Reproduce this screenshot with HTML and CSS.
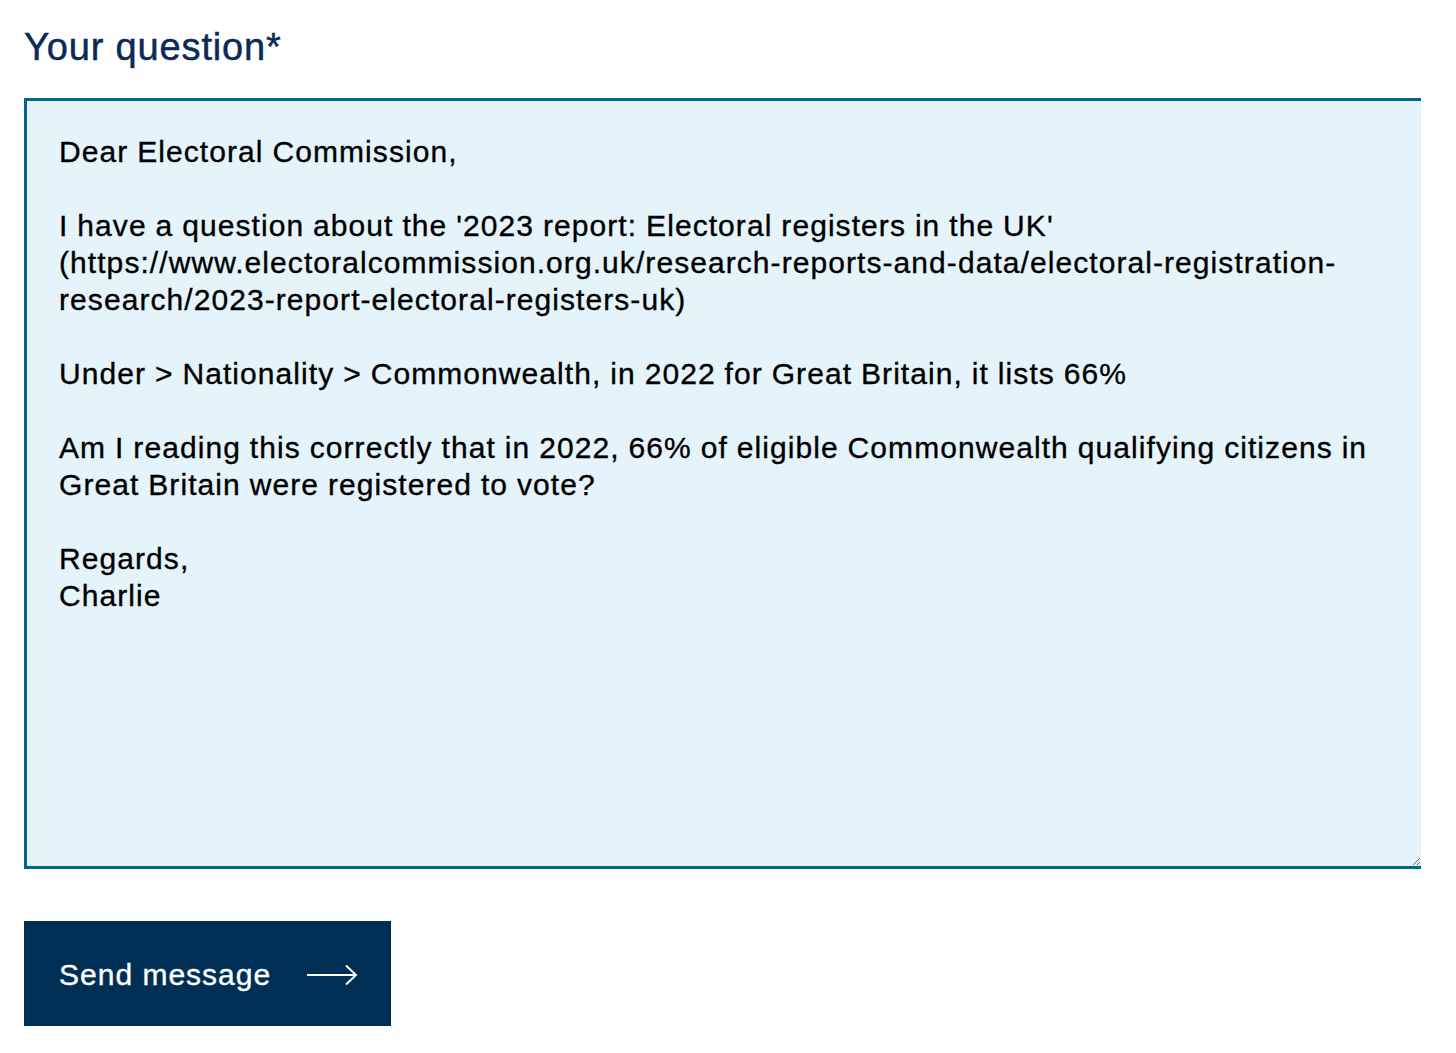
FILE: index.html
```html
<!DOCTYPE html>
<html lang="en">
<head>
<meta charset="utf-8">
<title>Your question</title>
<link rel="stylesheet" href="styles.css">
</head>
<body>
<form class="form">
<label class="label" for="q">Your question*</label>
<textarea class="field" id="q">Dear Electoral Commission,

I have a question about the '2023 report: Electoral registers in the UK' (https://www.electoralcommission.org.uk/research-reports-and-data/electoral-registration-research/2023-report-electoral-registers-uk)

Under &gt; Nationality &gt; Commonwealth, in 2022 for Great Britain, it lists 66%

Am I reading this correctly that in 2022, 66% of eligible Commonwealth qualifying citizens in Great Britain were registered to vote?

Regards,
Charlie</textarea>
<button class="send" type="button"><span class="send-text">Send message</span><svg class="arrow" width="52" height="22" viewBox="0 0 52 22"><path d="M1 11H50M40 1.5L50 11L40 20.5" fill="none" stroke="#fff" stroke-width="2"/></svg></button>
</form>
</body>
</html>
```
FILE: styles.css
```css
html, body {
  margin: 0;
  padding: 0;
  background: #fff;
}
body {
  font-family: "Liberation Sans", Arial, sans-serif;
  overflow: hidden;
}
.form {
  display: flex;
  flex-direction: column;
  align-items: flex-start;
  padding: 24px 0 0 24px;
}
.label {
  display: block;
  font-size: 38px;
  line-height: 46px;
  letter-spacing: 0.85px;
  color: #0b2a55;
  -webkit-text-stroke: 0.5px #0b2a55;
  margin: 0 0 28px 0;
}
.field {
  box-sizing: border-box;
  width: 1397px;
  height: 771px;
  margin: 0;
  border: 3px solid #00668c;
  border-right: 0;
  background: #e5f4fa;
  padding: 32px 40px 0 32px;
  font-family: "Liberation Sans", Arial, sans-serif;
  font-size: 30px;
  line-height: 37px;
  letter-spacing: 1.07px;
  word-spacing: -0.5px;
  color: #000;
  -webkit-text-stroke: 0.35px #000;
  outline: none;
  resize: vertical;
}
.send {
  margin-top: 52px;
  display: flex;
  align-items: center;
  gap: 35px;
  width: 367px;
  height: 105px;
  padding: 2px 0 0 35px;
  box-sizing: border-box;
  border: 0;
  background: #002f56;
  color: #fff;
  font-family: "Liberation Sans", Arial, sans-serif;
  font-size: 30px;
  cursor: pointer;
}
.send-text {
  letter-spacing: 1px;
  -webkit-text-stroke: 0.35px #fff;
}
.arrow {
  display: block;
}
```
